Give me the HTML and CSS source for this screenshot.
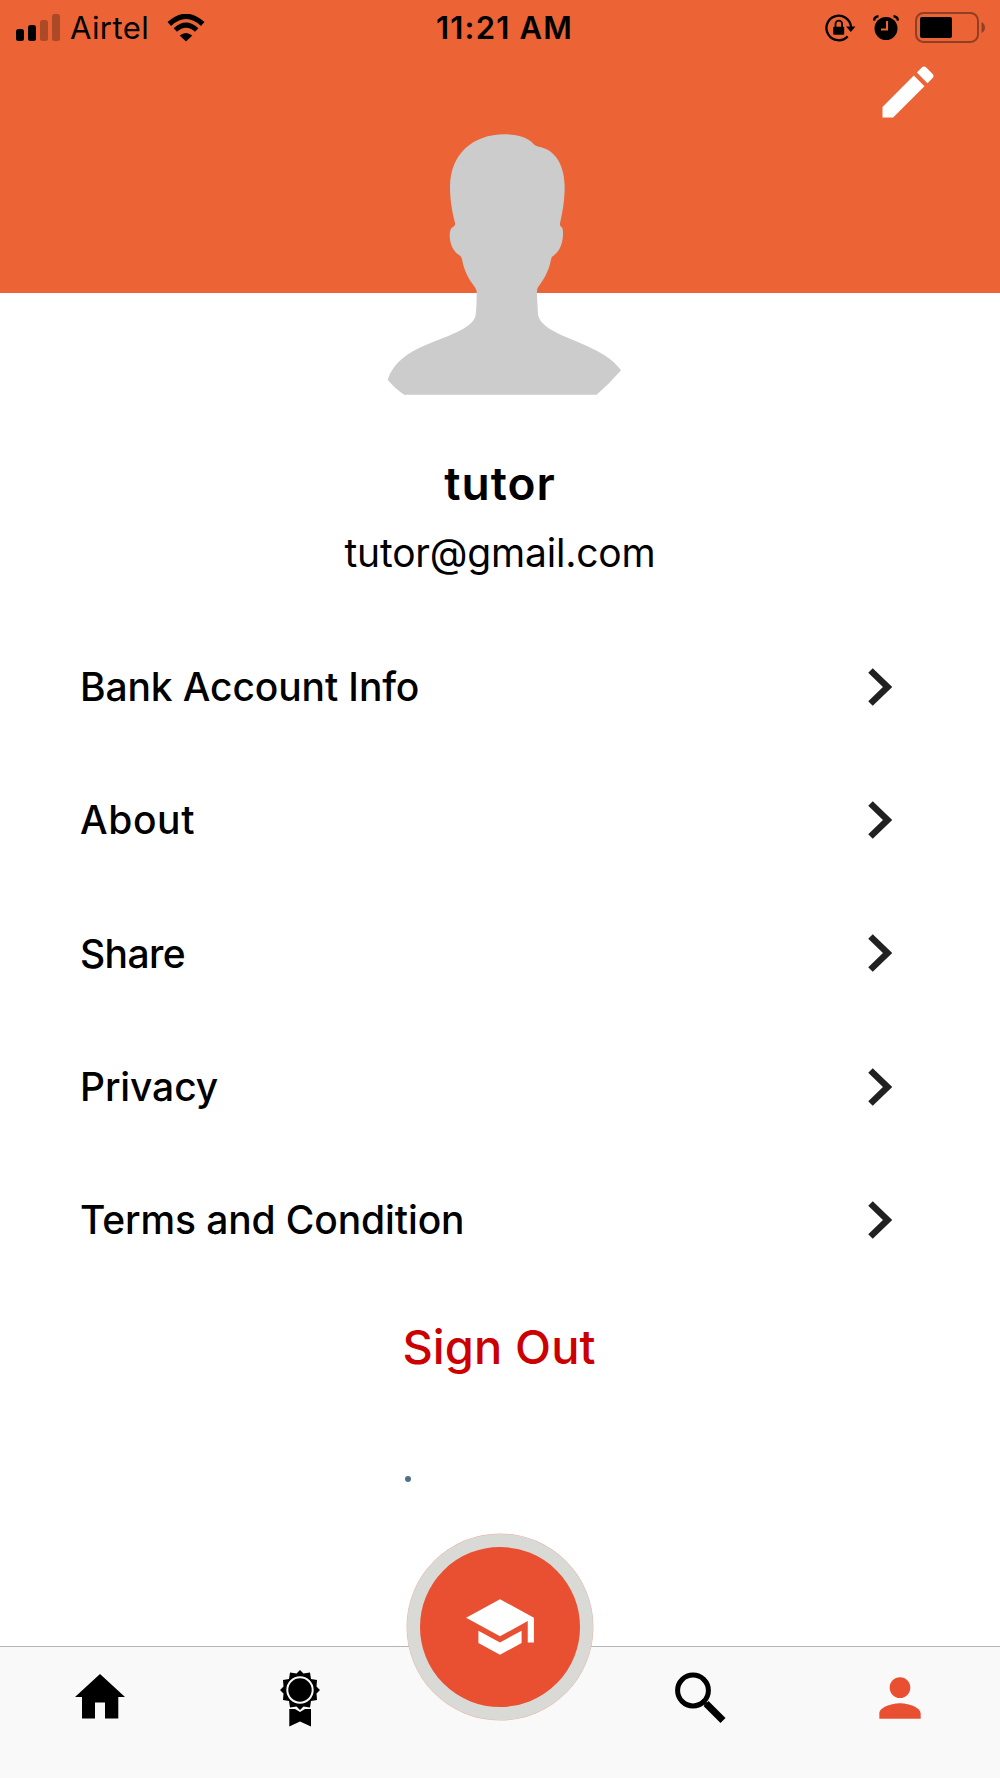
FILE: index.html
```html
<!DOCTYPE html>
<html lang="en">
<head>
    <meta charset="UTF-8">
    <meta name="viewport" content="width=device-width, initial-scale=1.0">
    <title>Profile</title>
    <link rel="stylesheet" href="styles.css">
</head>
<body>
    <div class="screen">
        <header class="header">
            <div class="status-bar">
                <div class="status-left">
                    <svg class="signal" viewBox="0 0 44 28">
                        <rect x="0" y="15" width="8" height="12" rx="2.5"/>
                        <rect x="12" y="11" width="8" height="16" rx="2.5"/>
                        <rect x="24" y="6" width="8" height="21" rx="2.5" opacity="0.27"/>
                        <rect x="36" y="0" width="8" height="27" rx="2.5" opacity="0.27"/>
                    </svg>
                    <span class="carrier">Airtel</span>
                    <svg class="wifi" viewBox="0 0 38 28">
                        <path d="M2.3 10Q19-5.2 35.700 10" fill="none" stroke="#000" stroke-width="5.2"/>
                        <path d="M8.300 16Q19 6.300 29.700 16" fill="none" stroke="#000" stroke-width="5"/>
                        <path d="M12.700 21.500Q19 16.500 25.300 21.500L19 27.500z"/>
                    </svg>
                </div>
                <span class="time">11:21 AM</span>
                <div class="status-right">
                    <svg class="lock" viewBox="0 0 31 28">
                        <path d="M22.700 22.400A12.300 12.300 0 1 1 26 13" fill="none" stroke="#000" stroke-width="2.300"/>
                        <path d="M21 12.500h9.500L25.800 18z"/>
                        <rect x="8.200" y="12.700" width="11" height="8" rx="1"/>
                        <path d="M10.500 13V10a3.300 3.300 0 0 1 6.600 0v3" fill="none" stroke="#000" stroke-width="1.800"/>
                    </svg>
                    <svg class="alarm" viewBox="0 0 26 26">
                        <circle cx="13" cy="13.500" r="11.500"/>
                        <path d="M1 5.500Q1.500 1.500 5.500 1.200M25 5.500Q24.500 1.500 20.500 1.200" fill="none" stroke="#000" stroke-width="2.400"/>
                        <path d="M14 6v8.500H8" fill="none" stroke="#ec6436" stroke-width="2"/>
                    </svg>
                    <svg class="battery" viewBox="0 0 71 31">
                        <rect x="1" y="1" width="62" height="29" rx="7.500" fill="none" stroke="#8f4024" stroke-width="2"/>
                        <rect x="5" y="5" width="32" height="21" rx="2"/>
                        <path d="M66.500 10Q70 12 70 15.500T66.500 21z" fill="#8f4024"/>
                    </svg>
                </div>
            </div>
            <button type="button" class="edit-btn" aria-label="Edit profile">
                <svg viewBox="0 0 24 24">
                    <path d="M3 17.250V21h3.750L17.810 9.940l-3.750-3.750L3 17.250zM20.710 7.040c.390-.390.390-1.020 0-1.410l-2.340-2.340c-.390-.390-1.020-.390-1.410 0l-1.830 1.830 3.750 3.750 1.830-1.830z"/>
                </svg>
            </button>
        </header>

        <main class="profile">
            <svg class="avatar" viewBox="0 0 810 870">
                <path d="M405 43C440 43 474 52 488 69C494 77 501 80 510 81C554 90 583 133 584 198C584 240 578 276 571 305C568 315 571 319 577 323C583 345 577 391 550 407C545 410 544 413 542 424C536 452 522 480 505 500C500 506 501 515 501 525L504 585C510 612 541 630 582 649C650 679 715 699 753 751Q720 790 680 824H103Q75 806 53 779C70 727 114 697 169 674C230 648 302 628 316 590Q320 568 320 520C321 510 317 505 312 498C293 474 281 446 276 418C274 409 271 408 264 403C241 387 233 344 244 325C248 320 257 320 255 308C247 277 240 243 240 198C242 104 306 43 405 43z"/>
            </svg>
            <h1 class="name">tutor</h1>
            <p class="email">tutor@gmail.com</p>

            <ul class="menu">
                <li class="menu-item">
                    <span>Bank Account Info</span>
                    <svg class="chevron" viewBox="0 0 24 38"><path d="M2.500 2.500L19.500 19L2.500 35.500"/></svg>
                </li>
                <li class="menu-item">
                    <span class="wide">About</span>
                    <svg class="chevron" viewBox="0 0 24 38"><path d="M2.500 2.500L19.500 19L2.500 35.500"/></svg>
                </li>
                <li class="menu-item">
                    <span class="narrow">Share</span>
                    <svg class="chevron" viewBox="0 0 24 38"><path d="M2.500 2.500L19.500 19L2.500 35.500"/></svg>
                </li>
                <li class="menu-item">
                    <span>Privacy</span>
                    <svg class="chevron" viewBox="0 0 24 38"><path d="M2.500 2.500L19.500 19L2.500 35.500"/></svg>
                </li>
                <li class="menu-item">
                    <span>Terms and Condition</span>
                    <svg class="chevron" viewBox="0 0 24 38"><path d="M2.500 2.500L19.500 19L2.500 35.500"/></svg>
                </li>
            </ul>

            <button type="button" class="sign-out">Sign Out</button>
            <div class="dot"></div>
        </main>

        <nav class="tab-bar">
            <a class="tab" aria-label="Home">
                <svg class="home" viewBox="0 0 50 45">
                    <path d="M25 0L50 23H43.300V44.500H30V28.500H20V44.500H7V23H0z"/>
                </svg>
            </a>
            <a class="tab" aria-label="Awards">
                <svg class="award" viewBox="0 0 40 57">
                    <path d="M20 0L23.500 3.500L30 2.500L31 9L37 10L36.500 16.500L40 20L36.500 23.500L37 30L31 31L30 37.500L23.500 36.500L20 40L16.500 36.500L10 37.500L9 31L3 30L3.500 23.500L0 20L3.500 16.500L3 10L9 9L10 2.500L16.500 3.500z"/>
                    <circle cx="20" cy="20" r="12.700" fill="none" stroke="#f9f9f9" stroke-width="2"/>
                    <path d="M9.300 39H15L20 42L25 39H31V56.500L20 51.500L9.300 56.500z"/>
                </svg>
            </a>
            <a class="tab" aria-label="Courses">
                <span class="fab">
                    <svg viewBox="0 0 24 24">
                        <path d="M5 13.180v4L12 21l7-3.820v-4L12 17l-7-3.820zM12 3L1 9l11 6 9-4.910V17h2V9L12 3z"/>
                    </svg>
                </span>
            </a>
            <a class="tab" aria-label="Search">
                <svg class="search" viewBox="0 0 51 51">
                    <circle cx="18" cy="18.500" r="15.400" fill="none" stroke="#000" stroke-width="5"/>
                    <path d="M31 31.500L48 48.500" stroke="#000" stroke-width="7"/>
                    <path d="M27 28L31 32" stroke="#000" stroke-width="3.500"/>
                </svg>
            </a>
            <a class="tab active" aria-label="Profile">
                <svg class="person" viewBox="0 0 24 24">
                    <path d="M12 12c2.210 0 4-1.790 4-4s-1.790-4-4-4-4 1.790-4 4 1.790 4 4 4zm0 2c-2.670 0-8 1.340-8 4v2h16v-2c0-2.660-5.330-4-8-4z"/>
                </svg>
            </a>
        </nav>
    </div>
</body>
</html>
```
FILE: styles.css
```css
* {
    box-sizing: border-box;
}

body {
    margin: 0;
    font-family: Inter, "Liberation Sans", sans-serif;
    background: #ffffff;
    color: #000;
}

svg {
    display: block;
    flex: none;
}

button {
    background: none;
    border: none;
    padding: 0;
    font-family: inherit;
    cursor: pointer;
}

.screen {
    display: flex;
    flex-direction: column;
    width: 1000px;
    height: 1778px;
}

/* Header */
.header {
    flex: none;
    height: 293px;
    background: #ec6436;
}

.status-bar {
    display: grid;
    grid-template-columns: 1fr auto 1fr;
    align-items: center;
    height: 55px;
    padding: 0 14px 0 16px;
}

.status-left,
.status-right {
    display: flex;
    align-items: center;
}

.status-right {
    justify-content: flex-end;
}

.signal {
    width: 44px;
    height: 28px;
}

.carrier {
    width: 107px;
    padding-left: 10px;
    font-size: 31px;
    letter-spacing: 0.4px;
}

.wifi {
    width: 38px;
    height: 28px;
}

.time {
    padding-left: 7px;
    font-size: 31px;
    font-weight: 600;
    letter-spacing: 1.2px;
}

.lock {
    width: 31px;
    height: 28px;
    margin-right: 17px;
}

.alarm {
    width: 26px;
    height: 26px;
    margin-right: 16px;
}

.battery {
    width: 71px;
    height: 31px;
}

.edit-btn {
    display: block;
    margin: 3px 58px 0 auto;
}

.edit-btn svg {
    width: 68px;
    height: 68px;
    fill: #ffffff;
}

/* Profile */
.profile {
    flex: 1;
    display: flex;
    flex-direction: column;
    align-items: center;
}

.avatar {
    width: 270px;
    height: 290px;
    margin: -173px 0 0 10px;
    fill: #cccccc;
}

.name {
    margin: 45px 0 0;
    font-size: 46px;
    font-weight: 600;
    line-height: 56px;
    letter-spacing: 1px;
}

.email {
    margin: 18px 0 0;
    font-size: 39px;
    line-height: 48px;
    letter-spacing: -0.2px;
}

.menu {
    width: 100%;
    margin: 43px 0 0;
    padding: 0 108px 0 80px;
    list-style: none;
}

.menu-item {
    display: flex;
    align-items: center;
    justify-content: space-between;
    height: 133.3px;
    font-size: 39px;
    font-weight: 500;
    letter-spacing: -0.12px;
}

.wide {
    letter-spacing: 0.6px;
}

.narrow {
    letter-spacing: -0.6px;
}

.chevron {
    width: 24px;
    height: 38px;
    fill: none;
    stroke: #212121;
    stroke-width: 6.5;
}

.sign-out {
    margin: 32px 2px 0 0;
    font-size: 47px;
    font-weight: 500;
    line-height: 58px;
    letter-spacing: 0.1px;
    color: #cc0000;
}

.dot {
    width: 6px;
    height: 6px;
    margin: 100px 184px 0 0;
    border-radius: 50%;
    background: #4f7186;
}

/* Bottom tabs */
.tab-bar {
    flex: none;
    display: flex;
    height: 132px;
    border-top: 1px solid #b5b5b5;
    background: #f9f9f9;
}

.tab {
    flex: 1;
    display: flex;
    align-items: flex-start;
    justify-content: center;
}

.home {
    width: 50px;
    height: 45px;
    margin-top: 27px;
}

.award {
    width: 40px;
    height: 57px;
    margin-top: 23px;
}

.search {
    width: 51px;
    height: 51px;
    margin-top: 25px;
}

.person {
    width: 62px;
    height: 62px;
    margin-top: 20px;
}

.active {
    fill: #e95032;
}

.fab {
    display: flex;
    flex: none;
    align-items: center;
    justify-content: center;
    width: 186px;
    height: 186px;
    margin-top: -113px;
    border: 13px solid #d9dad5;
    border-radius: 50%;
    background: #e95032;
    box-shadow: 0 0 0 0.5px #e8b5a8;
}

.fab svg {
    width: 74px;
    height: 74px;
    fill: #ffffff;
}
```
